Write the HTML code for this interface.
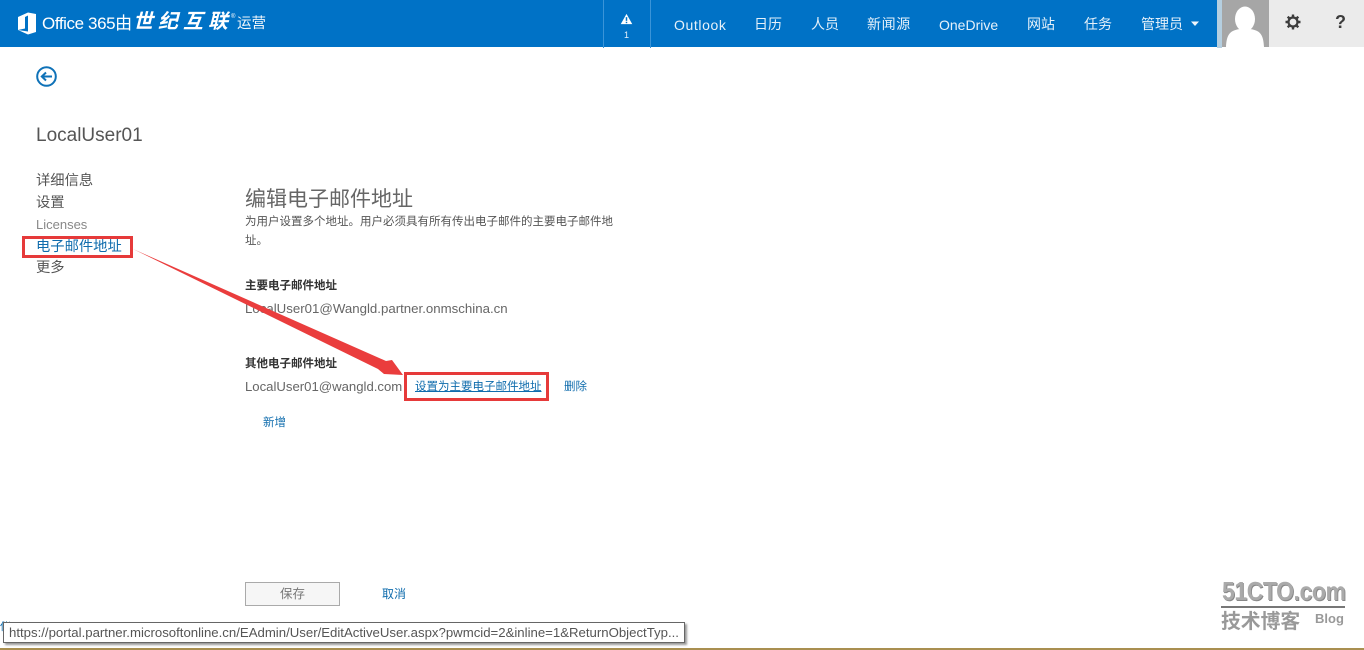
<!DOCTYPE html>
<html lang="zh-CN"><head><meta charset="utf-8"><title>编辑电子邮件地址</title>
<style>
html,body{margin:0;padding:0;width:1364px;height:650px;overflow:hidden;background:#fff}
body{position:relative;font-family:"Liberation Sans","Noto Sans CJK SC",sans-serif;color:#555}
.a{position:absolute;white-space:nowrap;line-height:1}
.n{color:#e6f1fa;font-size:14px;top:17px}
.b{color:#0f6cad}
.r{position:absolute;border:3px solid #e63a3a;box-sizing:border-box}
</style></head><body>
<div class="a" style="left:0;top:0;width:1364px;height:47px;background:#0072c6"></div>
<svg class="a" style="left:18px;top:12px" width="18" height="23" viewBox="0 0 18 23"><path d="M0 5L10 .5L18 2V20L10 22.500L0 18L10 19.500V3.500L7 5V16.500L0 18Z" fill="#fff"/></svg>
<div class="a" style="left:42px;top:15px;font-size:17px;color:#fff;letter-spacing:-.4px">Office 365由</div>
<div class="a" style="left:133px;top:12px;font-size:20px;color:#fff;font-weight:bold;font-style:italic;letter-spacing:5px">世纪互联</div>
<div class="a" style="left:231px;top:14px;font-size:6px;color:#fff">®</div>
<div class="a" style="left:237px;top:17px;font-size:14.500px;color:#f0f6fb">运营</div>

<div class="a" style="left:603px;top:0;width:1px;height:48px;background:#3a94d8"></div>
<div class="a" style="left:650px;top:0;width:1px;height:48px;background:#3a94d8"></div>
<svg class="a" style="left:620px;top:13px" width="13" height="12" viewBox="0 0 14 12"><path d="M7 .5L13.200 11.500H.8Z" fill="#fff"/><rect x="6.200" y="4" width="1.600" height="4" fill="#0072c6"/><rect x="6.200" y="9" width="1.600" height="1.500" fill="#0072c6"/></svg>
<div class="a" style="left:624px;top:31px;font-size:9px;color:#e6f1fa">1</div>

<div class="a n" style="left:674px;top:18px;letter-spacing:.6px">Outlook</div>
<div class="a n" style="left:754px">日历</div>
<div class="a n" style="left:811px">人员</div>
<div class="a n" style="left:867px;letter-spacing:.6px">新闻源</div>
<div class="a n" style="left:939px;top:18px">OneDrive</div>
<div class="a n" style="left:1027px">网站</div>
<div class="a n" style="left:1084px">任务</div>
<div class="a n" style="left:1141px">管理员</div>
<svg class="a" style="left:1190px;top:21px" width="10" height="6" viewBox="0 0 10 6"><path d="M1 .5H9L5 5Z" fill="#f0f6fb"/></svg>

<div class="a" style="left:1217px;top:0;width:5px;height:48px;background:#b5cfe0"></div>
<div class="a" style="left:1222px;top:0;width:47px;height:47px;background:#a6a6a6"></div>
<svg class="a" style="left:1222px;top:0" width="47" height="47" viewBox="0 0 47 47"><ellipse cx="23" cy="19" rx="10" ry="12.500" fill="#fff"/><path d="M4 47C4.500 38 6 33 12 30.500C16 29 19 28.500 23 29.500C27 28.500 30 29 34 30.500C40 33 41.500 38 42 47Z" fill="#fff"/></svg>
<div class="a" style="left:1269px;top:0;width:95px;height:47px;background:#ebebeb"></div>
<svg class="a" style="left:1285px;top:14px" width="16" height="16" viewBox="0 0 16 16"><circle cx="8" cy="8" r="4.500" fill="none" stroke="#3c3c3c" stroke-width="2.200"/><g stroke="#3c3c3c" stroke-width="2.400"><path d="M8 .5V3M8 13V15.500M.5 8H3M13 8H15.500M2.700 2.700L4.500 4.500M11.500 11.500L13.300 13.300M13.300 2.700L11.500 4.500M4.500 11.500L2.700 13.300"/></g></svg>
<div class="a" style="left:1335px;top:13px;font-size:18px;font-weight:bold;color:#3c3c3c">?</div>

<svg class="a" style="left:36px;top:66px" width="21" height="21" viewBox="0 0 21 21"><circle cx="10.500" cy="10.500" r="9.300" fill="none" stroke="#0f72b8" stroke-width="2"/><path d="M16 10.500H6M10 6.500L5.800 10.500L10 14.500" fill="none" stroke="#0f72b8" stroke-width="2"/></svg>

<div class="a" style="left:36px;top:126px;font-size:19px;color:#555">LocalUser01</div>
<div class="a" style="left:36px;top:174px;font-size:14.300px">详细信息</div>
<div class="a" style="left:36px;top:196px;font-size:14.300px">设置</div>
<div class="a" style="left:36px;top:218px;font-size:13px;color:#888">Licenses</div>
<div class="a b" style="left:36px;top:240px;font-size:14.300px">电子邮件地址</div>
<div class="a" style="left:36px;top:261px;font-size:14.300px">更多</div>

<div class="a" style="left:245px;top:189px;font-size:21px;color:#666">编辑电子邮件地址</div>
<div class="a" style="left:245px;top:217px;font-size:11.500px">为用户设置多个地址。用户必须具有所有传出电子邮件的主要电子邮件地</div>
<div class="a" style="left:245px;top:236px;font-size:11.500px">址。</div>
<div class="a" style="left:245px;top:281px;font-size:11.500px;font-weight:bold;color:#333">主要电子邮件地址</div>
<div class="a" style="left:245px;top:302px;font-size:13.250px;color:#666">LocalUser01@Wangld.partner.onmschina.cn</div>
<div class="a" style="left:245px;top:359px;font-size:11.500px;font-weight:bold;color:#333">其他电子邮件地址</div>
<div class="a" style="left:245px;top:380px;font-size:13.150px;color:#666">LocalUser01@wangld.com</div>
<div class="a b" style="left:415px;top:382px;font-size:11.500px;text-decoration:underline">设置为主要电子邮件地址</div>
<div class="a b" style="left:564px;top:382px;font-size:11.500px">删除</div>
<div class="a b" style="left:263px;top:418px;font-size:11.500px">新增</div>

<div class="a" style="left:245px;top:582px;width:95px;height:24px;box-sizing:border-box;border:1px solid #aaa;background:#f6f6f6;text-align:center;font-size:12.500px;line-height:22px;color:#777">保存</div>
<div class="a b" style="left:382px;top:588px;font-size:12px">取消</div>

<svg class="a" style="left:0;top:0" width="1364" height="650" viewBox="0 0 1364 650"><path d="M133 249L386 361L392 360L403 375L384 374L378 369Z" fill="#ea3d3d"/></svg>
<div class="r" style="left:22px;top:236px;width:111px;height:22px"></div>
<div class="r" style="left:404px;top:372px;width:145px;height:29px"></div>

<div class="a" style="left:1222px;top:578px;font-size:26px;font-weight:bold;color:#aaa;letter-spacing:-.5px;transform:scaleX(.885);transform-origin:0 0;text-shadow:1px 1px 0 #888">51CTO.com</div>
<div class="a" style="left:1221px;top:606px;width:124px;height:2px;background:#777"></div>
<div class="a" style="left:1221px;top:613px;font-size:19.800px;font-weight:bold;color:#999">技术博客</div>
<div class="a" style="left:1315px;top:612px;font-size:13px;font-weight:bold;color:#999">Blog</div>

<div class="a" style="left:0;top:648px;width:1364px;height:2px;background:#a98f50"></div>
<div class="a" style="left:0;top:622px;font-size:11px;color:#0f6cad">仪</div>
<div class="a" style="left:3px;top:622px;width:682px;height:21px;box-sizing:border-box;background:#fff;border:1px solid #666;box-shadow:2px 2px 2px #999;font-size:13.200px;line-height:19px;padding-left:5px;color:#555">https://portal.partner.microsoftonline.cn/EAdmin/User/EditActiveUser.aspx?pwmcid=2&amp;inline=1&amp;ReturnObjectTyp...</div>
</body></html>
